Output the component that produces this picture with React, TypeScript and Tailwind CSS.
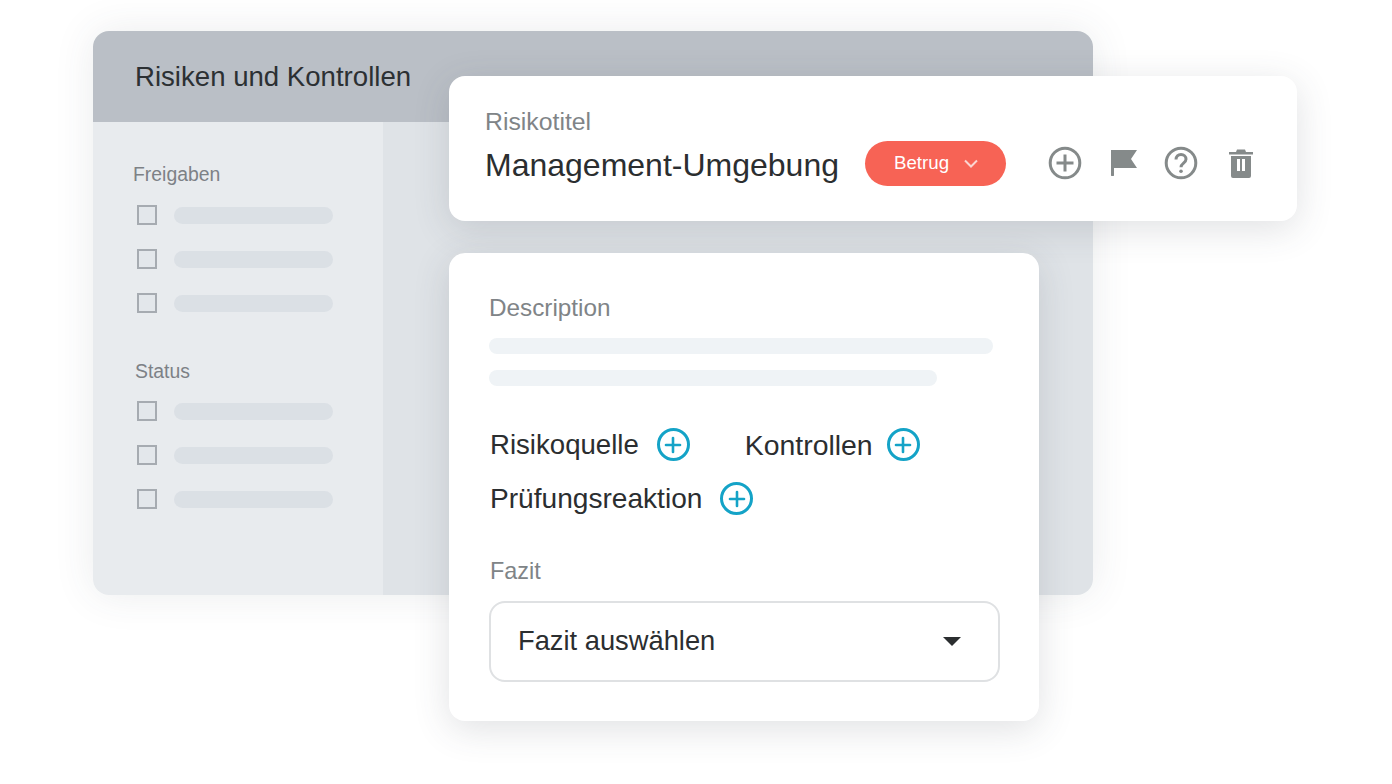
import { Plus } from 'lucide-react';

const font = "font-['Liberation_Sans',Arial,sans-serif]";

function FilterGroup({ title, titleClass }: { title: string; titleClass: string }) {
  return (
    <div>
      <div className={`text-[19.4px] leading-[24px] text-[#7d8186] ${titleClass}`}>{title}</div>
      <div className="mt-[19px] flex flex-col gap-[24px]">
        {[0, 1, 2].map(i => (
          <div key={i} className="flex items-center gap-[17px] pl-[4px]">
            <div className="w-[20px] h-[20px] border-[2px] border-[#a6abb1] bg-[#e3e7eb]" />
            <div className="w-[159px] h-[17px] rounded-full bg-[#dbe0e5] blur-[0.5px]" />
          </div>
        ))}
      </div>
    </div>
  );
}

function AddRow({ label, gap, size }: { label: string; gap: string; size: string }) {
  return (
    <div className={`flex items-center ${gap}`}>
      <span className={`${size} leading-[32px] text-[#2b2e30] whitespace-nowrap`}>{label}</span>
      <span className="w-[33px] h-[33px] rounded-full border-[3px] border-[#14a3c7] flex items-center justify-center">
        <Plus size={24} strokeWidth={2.6} className="shrink-0 text-[#14a3c7]" />
      </span>
    </div>
  );
}

export default function App() {
  return (
    <div className={`relative w-[1392px] h-[784px] overflow-hidden bg-white ${font}`}>
      {/* Background window */}
      <div className="ml-[93px] mt-[31px] inline-flex flex-col w-[1000px] h-[564px] rounded-[16px] overflow-hidden shadow-[0_0_40px_rgba(60,70,80,0.10)]">
        <div className="h-[91px] shrink-0 bg-[#babfc6] pl-[42px] pt-[28px]">
          <h1 className="text-[27.6px] leading-[36px] font-normal text-[#2c3033]">Risiken und Kontrollen</h1>
        </div>
        <div className="flex-1 flex">
          <div className="w-[290px] bg-[#e8ebee] pl-[40px] pt-[40px] flex flex-col gap-[45px]">
            <FilterGroup title="Freigaben" titleClass="" />
            <FilterGroup title="Status" titleClass="pl-[2px] pt-[1px] -mb-[1px]" />
          </div>
          <div className="flex-1 bg-[#dfe3e7]" />
        </div>
      </div>

      {/* Title card */}
      <div className="absolute left-[449px] top-[76px] w-[848px] h-[145px] rounded-[16px] bg-white shadow-[0_8px_36px_rgba(60,70,80,0.16)] pl-[36px] pt-[32px]">
        <div className="text-[24.8px] leading-[28px] text-[#808487]">Risikotitel</div>
        <div className="mt-[3px] flex items-center">
          <span className="w-[355px] pt-[4px] text-[32px] leading-[44px] text-[#2b2e30] whitespace-nowrap">Management-Umgebung</span>
          <div className="ml-[25px] w-[141px] h-[45px] rounded-full bg-[#f76355] flex items-center pl-[29px] gap-[15px] text-white text-[18.7px]">
            <span>Betrug</span>
            <svg width="14" height="9" viewBox="0 0 14 9" fill="none" stroke="#fbd5d0" strokeWidth="2">
              <path d="M1 1.5l6 6 6-6" />
            </svg>
          </div>
          <div className="ml-[42px] flex items-center text-[#858a8a]">
            <svg width="34" height="34" viewBox="0 0 34 34" fill="none" stroke="currentColor" strokeWidth="3">
              <circle cx="17" cy="17" r="14.8" />
              <path d="M17 8.5v17M8.5 17h17" />
            </svg>
            <svg width="26" height="26" viewBox="0 0 26 26" fill="currentColor" className="ml-[29px]">
              <path d="M0 0h26l-6 9 6 9H3v7a1.500 1.500 0 0 1-3 0z" />
            </svg>
            <svg width="34" height="34" viewBox="0 0 34 34" fill="none" stroke="currentColor" strokeWidth="3" className="ml-[27px]">
              <circle cx="17" cy="17" r="14.8" />
              <path d="M12 13.5c0-3 2.200-5 5-5s5 2 5 4.700c0 3.800-5 4-5 8" />
              <circle cx="17" cy="25.300" r="1.800" fill="currentColor" stroke="none" />
            </svg>
            <svg width="24" height="29" viewBox="0 0 24 29" fill="currentColor" className="ml-[31px]">
              <path d="M0 3h7l1-2.500h8l1 2.500h7v2.500H0z" />
              <path fillRule="evenodd" d="M2 7h20v20a2 2 0 0 1-2 2H4a2 2 0 0 1-2-2zM8 10v12h3V10zM13 10v12h3V10z" />
            </svg>
          </div>
        </div>
      </div>

      {/* Details card */}
      <div className="absolute left-[449px] top-[253px] w-[590px] h-[468px] rounded-[16px] bg-white shadow-[0_8px_36px_rgba(60,70,80,0.16)] pl-[40px] pr-[40px] pt-[41px]">
        <div className="text-[24.3px] leading-[28px] text-[#808487]">Description</div>
        <div className="mt-[16px] w-[504px] h-[16px] rounded-full bg-[#eff3f6] blur-[0.5px]" />
        <div className="mt-[16px] w-[448px] h-[16px] rounded-full bg-[#eff3f6] blur-[0.5px]" />
        <div className="mt-[42px] pl-[1px] flex items-center">
          <AddRow label="Risikoquelle" gap="gap-[18px]" size="text-[27.6px]" />
          <div className="ml-[55px]">
            <AddRow label="Kontrollen" gap="gap-[14px]" size="text-[28.4px]" />
          </div>
        </div>
        <div className="mt-[21px] pl-[1px]">
          <AddRow label="Prüfungsreaktion" gap="gap-[18px]" size="text-[28.1px]" />
        </div>
        <div className="mt-[42px] pl-[1px] text-[23.4px] leading-[28px] text-[#808487]">Fazit</div>
        <div className="mt-[16px] h-[81px] w-[511px] rounded-[16px] border-[2px] border-[#dfe1e3] flex items-center justify-between pl-[27px] pr-[37px]">
          <span className="text-[27.3px] text-[#2b2e30]">Fazit auswählen</span>
          <svg width="18" height="9" viewBox="0 0 18 9" fill="#2b2e30">
            <path d="M0 0h18L9 9z" />
          </svg>
        </div>
      </div>
    </div>
  );
}
